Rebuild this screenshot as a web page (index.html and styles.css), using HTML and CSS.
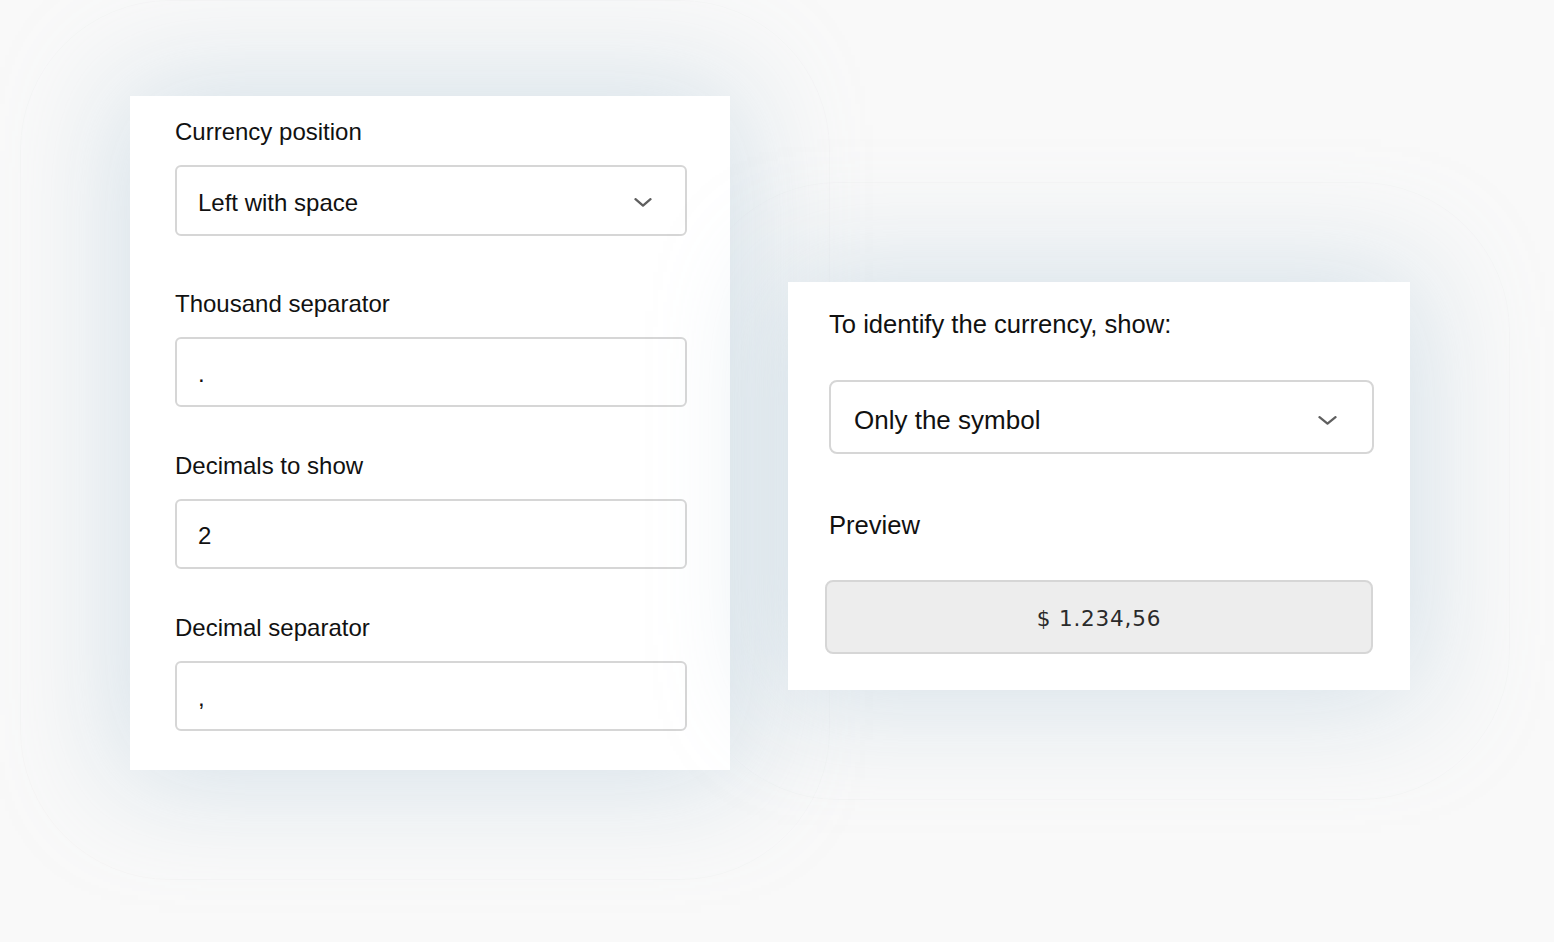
FILE: index.html
```html
<!DOCTYPE html>
<html lang="en">
<head>
<meta charset="utf-8">
<title>Currency format settings</title>
<link rel="stylesheet" href="styles.css">
</head>
<body>
<main class="stage">
  <section class="card card-format">
    <div class="field field-first">
      <label class="label">Currency position</label>
      <div class="control select">
        <span class="value">Left with space</span>
        <svg class="chevron" width="18" height="9" viewBox="0 0 18 9"><polyline points="1.5,1.2 9,7.6 16.5,1.2" fill="none" stroke="#5f5f5f" stroke-width="2.3" stroke-linecap="round" stroke-linejoin="round"/></svg>
      </div>
    </div>
    <div class="field">
      <label class="label">Thousand separator</label>
      <div class="control input"><span class="value">.</span></div>
    </div>
    <div class="field">
      <label class="label">Decimals to show</label>
      <div class="control input"><span class="value">2</span></div>
    </div>
    <div class="field">
      <label class="label">Decimal separator</label>
      <div class="control input"><span class="value">,</span></div>
    </div>
  </section>

  <section class="card card-preview">
    <label class="label-lg">To identify the currency, show:</label>
    <div class="control-lg select-lg">
      <span class="value-lg">Only the symbol</span>
      <svg class="chevron" width="19" height="9" viewBox="0 0 19 9"><polyline points="1.5,1.2 9.5,7.6 17.5,1.2" fill="none" stroke="#5f5f5f" stroke-width="2.3" stroke-linecap="round" stroke-linejoin="round"/></svg>
    </div>
    <label class="label-lg label-preview">Preview</label>
    <div class="preview-box">$ 1.234,56</div>
  </section>
</main>
</body>
</html>
```

FILE: styles.css
```css
html, body {
  margin: 0;
  padding: 0;
}

body {
  background: #f9f9f9;
  font-family: "Liberation Sans", Arial, sans-serif;
  color: #111;
  width: 1554px;
  height: 942px;
  overflow: hidden;
}

.stage {
  display: flex;
  align-items: flex-start;
  gap: 58px;
  padding: 96px 0 0 130px;
}

.card {
  position: relative;
  background: #fff;
  box-sizing: border-box;
  box-shadow: 0 0 110px 10px rgba(196, 214, 225, 0.7);
}

.card::before {
  content: "";
  position: absolute;
  border: 1px solid rgba(0, 0, 0, 0.016);
  border-radius: 150px;
  pointer-events: none;
  z-index: -1;
}

.card-format {
  width: 600px;
  height: 674px;
  padding: 22px 43px 0 45px;
  display: flex;
  flex-direction: column;
}

.card-format::before {
  left: -110px;
  top: -96px;
  right: -100px;
  bottom: -110px;
}

.field {
  display: flex;
  flex-direction: column;
  margin-top: 45px;
}

.field-first {
  margin-top: 0;
  margin-bottom: 9px;
}

.label {
  font-size: 24px;
  line-height: 28px;
  margin-bottom: 19px;
  color: #111;
}

.control {
  box-sizing: border-box;
  width: 512px;
  height: 70px;
  border: 2px solid #d6d6d6;
  border-radius: 6px;
  display: flex;
  align-items: center;
  padding: 4px 33px 0 21px;
  background: #fff;
}

.select {
  height: 71px;
}

.value {
  font-size: 24px;
  color: #111;
}

.chevron {
  margin-left: auto;
  display: block;
  flex: none;
}

.card-preview {
  width: 622px;
  height: 408px;
  margin-top: 186px;
  padding: 27px 36px 0 41px;
}

.card-preview::before {
  left: -100px;
  top: -100px;
  right: -100px;
  bottom: -110px;
}

.label-lg {
  display: block;
  font-size: 25.6px;
  line-height: 30px;
  color: #111;
}

.control-lg {
  box-sizing: border-box;
  width: 545px;
  height: 74px;
  margin-top: 41px;
  border: 2px solid #d6d6d6;
  border-radius: 8px;
  display: flex;
  align-items: center;
  padding: 6px 35px 0 23px;
}

.value-lg {
  font-size: 26px;
  color: #111;
}

.label-preview {
  margin-top: 56px;
}

.preview-box {
  box-sizing: border-box;
  width: 548px;
  height: 74px;
  margin: 40px 0 0 -4px;
  background: #ededed;
  border: 2px solid #d6d6d6;
  border-radius: 8px;
  display: flex;
  align-items: center;
  justify-content: center;
  padding-top: 3px;
  font-family: "DejaVu Sans", Verdana, sans-serif;
  font-size: 21.5px;
  letter-spacing: 0.8px;
  color: #2a2a2a;
}
```
